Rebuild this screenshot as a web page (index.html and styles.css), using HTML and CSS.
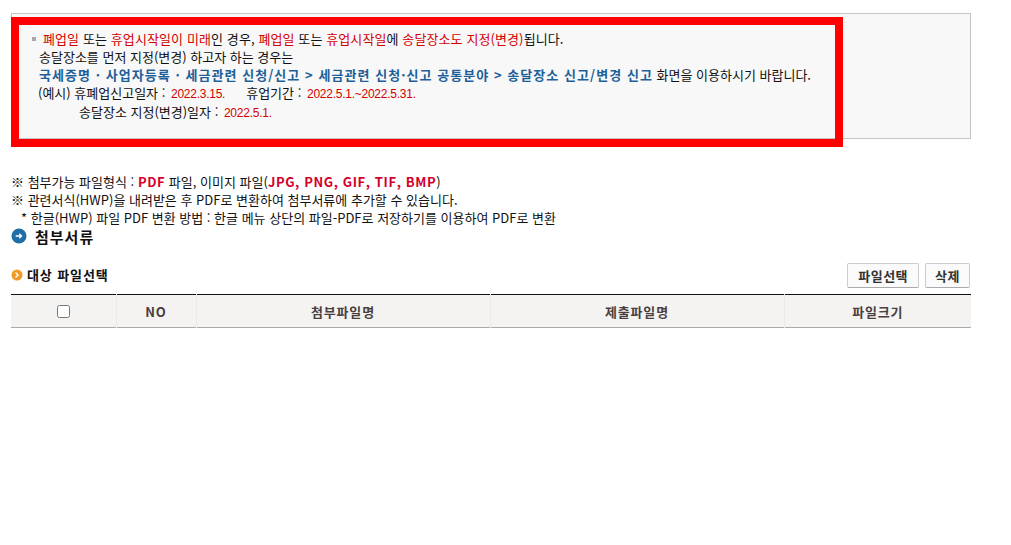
FILE: index.html
```html
<!DOCTYPE html>
<html lang="ko">
<head>
    <meta charset="UTF-8">
    <meta name="viewport" content="width=device-width, initial-scale=1.0">
    <title>첨부서류</title>
    <link rel="stylesheet" href="styles.css">
</head>
<body>
    <div class="notice">
        <p class="notice-first"><span class="bullet"></span><em>폐업일</em> 또는 <em>휴업시작일이 미래</em>인 경우, <em>폐업일</em> 또는 <em>휴업시작일</em>에 <em>송달장소도 지정(변경)</em>됩니다.</p>
        <p>송달장소를 먼저 지정(변경) 하고자 하는 경우는</p>
        <p><strong>국세증명 · 사업자등록 · 세금관련 신청/신고 &gt; 세금관련 신청·신고 공통분야 &gt; 송달장소 신고/변경 신고</strong> 화면을 이용하시기 바랍니다.</p>
        <p class="notice-example">(예시) 휴폐업신고일자 : <em class="date">2022.3.15.</em><span class="gap"></span>휴업기간 : <em class="date">2022.5.1.~2022.5.31.</em></p>
        <p class="notice-indent">송달장소 지정(변경)일자 : <em class="date">2022.5.1.</em></p>
        <div class="highlight"></div>
    </div>

    <div class="guide">
        <p>※ 첨부가능 파일형식 : <b>PDF</b> 파일, 이미지 파일(<b>JPG, PNG, GIF, TIF, BMP</b>)</p>
        <p>※ 관련서식(HWP)을 내려받은 후 PDF로 변환하여 첨부서류에 추가할 수 있습니다.</p>
        <p class="guide-sub">* 한글(HWP) 파일 PDF 변환 방법 : 한글 메뉴 상단의 파일-PDF로 저장하기를 이용하여 PDF로 변환</p>
    </div>

    <h2 class="title">
        <svg width="16" height="16" viewBox="0 0 17 17">
            <circle cx="8.5" cy="8.5" r="8" fill="#1f6ea8"/>
            <path d="M5 8.5h6M8.8 6.2l2.4 2.3-2.4 2.3" fill="none" stroke="#fff" stroke-width="1.4"/>
        </svg>
        첨부서류
    </h2>

    <div class="file-bar">
        <h3 class="subtitle">
            <svg width="12" height="12" viewBox="0 0 12 12">
                <circle cx="6" cy="6" r="5.5" fill="#f39a25"/>
                <path d="M4.5 3.5 7 6 4.5 8.5" fill="none" stroke="#fff" stroke-width="1.4"/>
            </svg>
            대상 파일선택
        </h3>
        <div class="file-buttons">
            <button>파일선택</button>
            <button>삭제</button>
        </div>
    </div>

    <table class="file-table">
        <thead>
            <tr>
                <th class="col-check"><input type="checkbox"></th>
                <th class="col-no">NO</th>
                <th class="col-name">첨부파일명</th>
                <th class="col-name">제출파일명</th>
                <th>파일크기</th>
            </tr>
        </thead>
    </table>
</body>
</html>
```

FILE: styles.css
```css
* {
    margin: 0;
    padding: 0;
    box-sizing: border-box;
}

body {
    background-color: #fff;
    color: #111;
    font-family: "Noto Sans CJK KR", "Liberation Sans", sans-serif;
    font-size: 13px;
    padding: 13px 40px 0 11px;
}

.notice {
    position: relative;
    height: 126px;
    padding: 16px 20px 0 27px;
    background-color: #f8f8f8;
    border: 1px solid #c4c4c4;
    line-height: 18px;
    white-space: nowrap;
}

.notice em {
    font-style: normal;
    color: #d40000;
}

.notice .date {
    margin-left: 2px;
    font-family: "Liberation Sans", sans-serif;
    font-size: 12px;
    letter-spacing: -0.25px;
}

.notice strong {
    color: #1d5f99;
    letter-spacing: 1.05px;
}

.notice-first {
    margin-left: -7px;
    letter-spacing: 0.1px;
}

.notice-example {
    margin-left: -1px;
}

.notice-indent {
    padding-left: 40px;
}

.bullet {
    display: inline-block;
    width: 4px;
    height: 4px;
    margin-right: 7px;
    vertical-align: 3px;
    background-color: #aaa;
}

.gap {
    display: inline-block;
    width: 21px;
}

/* red box drawn over the notice */
.highlight {
    position: absolute;
    top: 3px;
    left: -1px;
    width: 832px;
    height: 130px;
    border: 8px solid #f00;
}

.guide {
    margin-top: 34px;
    line-height: 18px;
}

.guide b {
    color: #d4002a;
    letter-spacing: 0.6px;
}

.guide-sub {
    padding-left: 10px;
}

.title {
    display: flex;
    align-items: center;
    gap: 8px;
    height: 18px;
    font-size: 15px;
    letter-spacing: 1px;
    color: #111;
}

.file-bar {
    display: flex;
    justify-content: space-between;
    align-items: flex-start;
    margin-top: 18px;
}

.subtitle {
    display: flex;
    align-items: center;
    gap: 4px;
    margin-top: 2px;
    font-size: 13px;
    color: #111;
    letter-spacing: 0.9px;
}

.file-buttons {
    display: flex;
    gap: 6px;
    margin-right: 1px;
}

.file-buttons button {
    height: 25px;
    padding: 0 10px;
    background-color: #fafafa;
    border: 1px solid #ccc;
    border-bottom-color: #aaa;
    border-radius: 2px;
    color: #333;
    font-family: inherit;
    font-size: 13px;
    font-weight: 700;
    letter-spacing: 0.5px;
}

.file-buttons button:last-child {
    padding: 0 9px;
}

.file-table {
    width: 960px;
    margin-top: 6px;
    border-collapse: collapse;
    table-layout: fixed;
    border-top: 1px solid #111;
    border-bottom: 1px solid #aaa;
}

.file-table th {
    height: 33px;
    background-color: #f4f3f1;
    border-left: 1px solid #ebebeb;
    color: #4a3f3f;
    font-size: 13px;
    letter-spacing: 0.8px;
}

.file-table th:first-child {
    border-left: none;
}

.col-check {
    width: 105px;
}

.col-no {
    width: 80px;
}

.col-name {
    width: 294px;
}

.file-table input {
    display: block;
    width: 13px;
    height: 13px;
    margin: 1px auto 0;
}
```
